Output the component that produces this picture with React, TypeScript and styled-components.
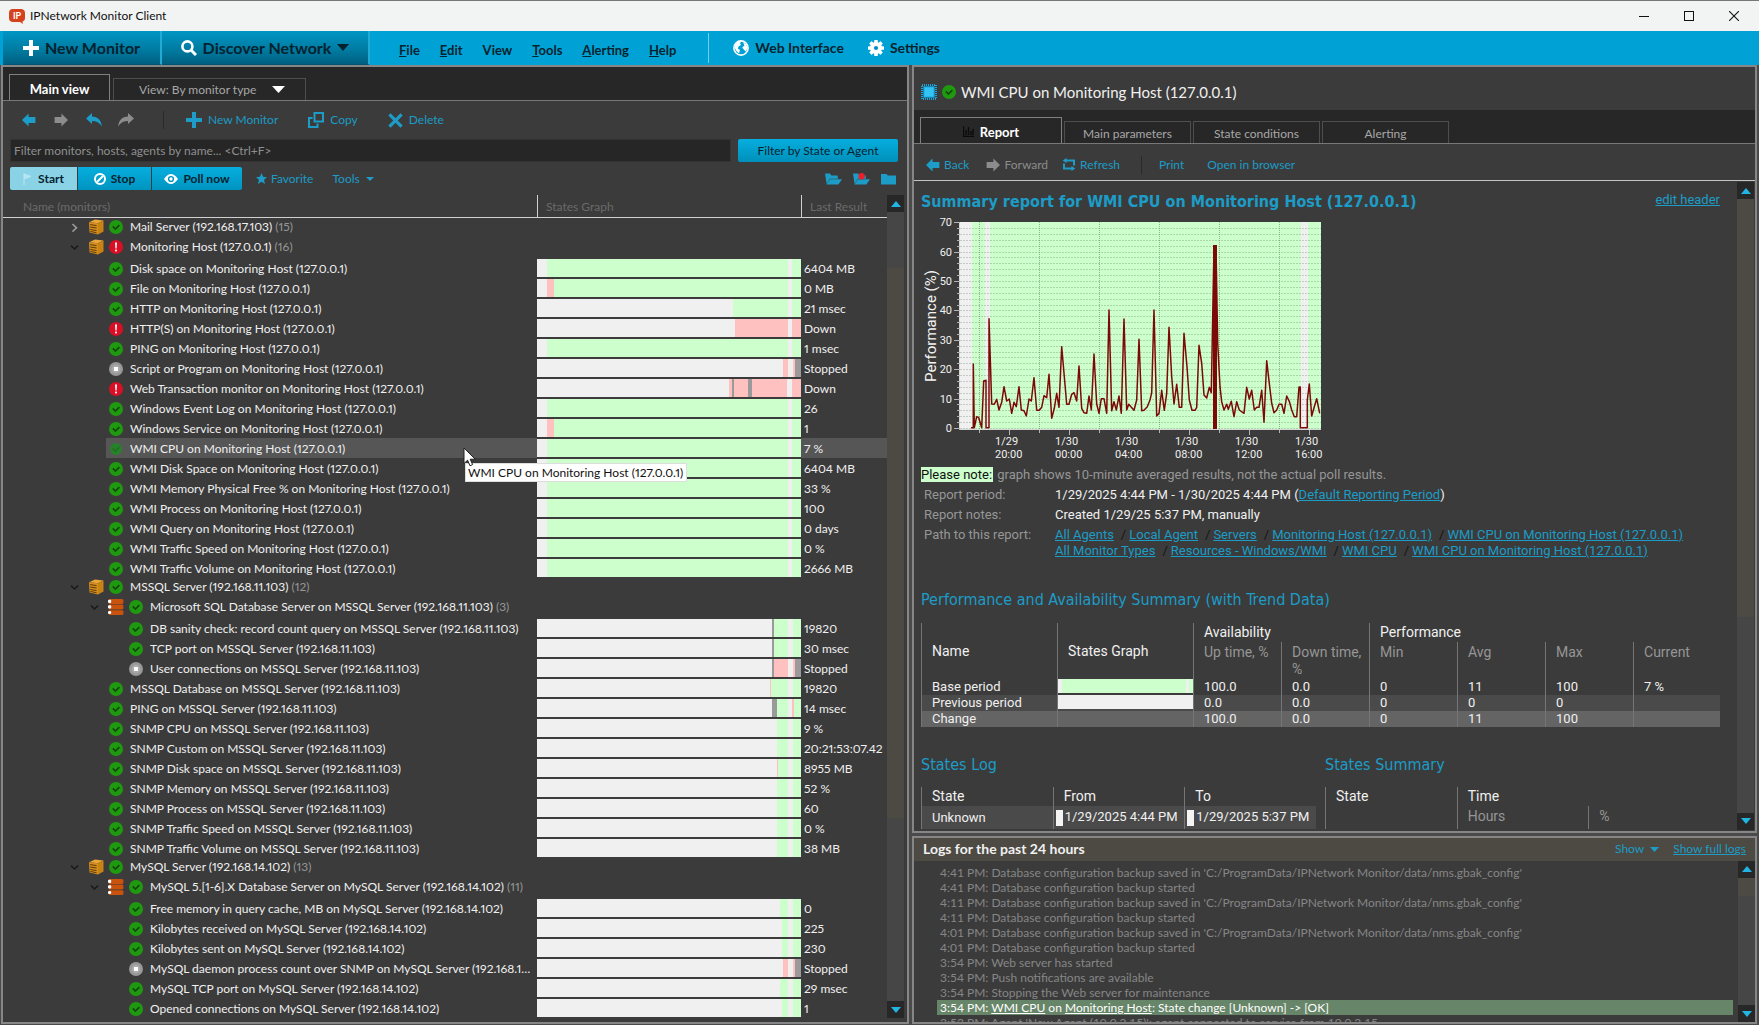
import React from 'react';
import styled, { createGlobalStyle, css } from 'styled-components';

const UI = 'Lato, "Open Sans", sans-serif';
const DOC = 'Roboto, "Liberation Sans", sans-serif';
const HEAD = '"DejaVu Sans Condensed", "DejaVu Sans", sans-serif';
const blue = '#1c9cc6';
const panel = '#3b3b3b';
const dark = '#272727';
const olive = '#4c4a43';
const edge = '#868686';

const Global = createGlobalStyle`
  *, *::before, *::after { box-sizing: border-box; }
  body { margin: 0; background: ${panel}; font: 12px/16px ${UI}; color: #f0f0f0; overflow: hidden; }
  button, input, select { font: inherit; color: inherit; margin: 0; padding: 0; border: 0; background: none; }
  svg { display: block; flex: none; }
  h1, h2, p, ol, dl, dd { margin: 0; padding: 0; font-weight: 400; }
  a { color: ${blue}; }
`;

/* ---------- window frame ---------- */
const Window = styled.div`
  height: 100vh; display: flex; flex-direction: column;
  border-top: 1px solid #77777a; background: #303030;
`;
const TitleBar = styled.header`
  height: 30px; flex: none; display: flex; align-items: center; gap: 5px;
  padding: 0 20px 0 9px; background: #f2f4f4; color: #111;
`;
const TitleText = styled.span`flex: 1;`;
const WinButtons = styled.div`display: flex; gap: 35px;`;
const WinButton = styled.button`width: 10px; height: 12px; display: grid; place-items: center;`;

const MenuBar = styled.nav`
  height: 34px; flex: none; display: flex; background: #00a2d5; padding-left: 3px;
`;
const BigButton = styled.button<{ $w: number }>`
  width: ${p => p.$w}px; display: flex; align-items: center; justify-content: center; gap: 6px;
  background: linear-gradient(#0096c4, #00799f 60%, #005f80);
  color: #03222f; font: 700 16px/20px ${UI};
  border-right: 2px solid #22a9d4;
  border-bottom: 1px solid #00546f;
`;
const Menus = styled.div`display: flex; align-items: center; gap: 20px; padding: 3px 32px 0 29px; color: #06222e; font-size: 13px;`;
const MenuItem = styled.button`font-weight: 700;`;
const Tools2 = styled.div`
  display: flex; align-items: center; gap: 24px; padding: 0 24px; margin: 2px 0;
  border-left: 1px solid #6fd0ee; color: #06222e; font-size: 14px;
`;
const IconMenu = styled.button`display: flex; align-items: center; gap: 6px; font-weight: 700;`;

const Body = styled.main`
  flex: 1; min-height: 0; display: grid; gap: 3px; background: #4a4a4a; padding: 0 2px 1px 1px;
  grid-template-columns: minmax(0, 908fr) minmax(0, 845fr);
`;
const Panel = styled.section`
  display: flex; flex-direction: column; min-height: 0; min-width: 0; background: ${panel};
  border: 2px solid ${edge}; overflow: hidden;
`;
const RightColumn = styled.div`display: grid; grid-template-rows: minmax(0, 767fr) minmax(0, 188fr); gap: 3px; min-height: 0;`;

/* ---------- tabs and tool rows ---------- */
const TabStrip = styled.div<{ $gap: number }>`
  height: 34px; flex: none; display: flex; align-items: flex-end; gap: ${p => p.$gap}px;
  background: ${dark}; border-bottom: 1px solid #777; padding-left: 6px;
`;
const tabBase = css<{ $w: number; $on?: boolean }>`
  width: ${p => p.$w}px; height: ${p => (p.$on ? 26 : 22)}px;
  border: 1px solid ${p => (p.$on ? '#808080' : '#4e4e4e')}; border-bottom: 0;
  color: ${p => (p.$on ? '#fff' : '#a8a8a8')}; background: ${dark};
`;
const Tab = styled.button<{ $w: number; $on?: boolean }>`
  ${tabBase} display: flex; align-items: center; justify-content: center; gap: 6px; padding-top: 2px;
  font-size: ${p => (p.$on ? 13 : 12)}px;
  font-weight: ${p => (p.$on ? 700 : 400)};
`;
const SelectTab = styled.label<{ $w: number }>`
  ${tabBase} display: flex; align-items: center; padding: 0 20px 0 25px; justify-content: space-between;
`;
const BareSelect = styled.select`appearance: none; outline: 0; flex: 1;`;

const ToolRow = styled.div<{ $h: number; $pad: number; $line?: boolean }>`
  height: ${p => p.$h}px; flex: none; display: flex; align-items: center; padding-left: ${p => p.$pad}px;
  ${p => p.$line && 'border-bottom: 1px solid #c4c4c4; padding-top: 5px;'}
`;
const Tool = styled.button<{ $mr: number; $off?: boolean; $gap?: number }>`
  display: flex; align-items: center; gap: ${p => p.$gap ?? 6}px; margin-right: ${p => p.$mr}px;
  color: ${p => (p.$off ? '#8c8c8c' : blue)};
`;
const Sep = styled.span<{ $mr: number }>`width: 1px; height: 18px; background: #2a2a2a; margin-right: ${p => p.$mr}px;`;

const FilterRow = styled.div`display: flex; gap: 7px; padding: 0 9px 0 7px; height: 23px; flex: none;`;
const FilterInput = styled.input`
  flex: 1; min-width: 0; background: #262626; border: 1px solid #333; padding-left: 3px; outline: 0;
  &::placeholder { color: #8f8f8f; opacity: 1; }
`;
const FilterButton = styled.button`
  width: 160px; border-radius: 2px; background: linear-gradient(#06aede, #0090ba); color: #06222e;
`;
const ActionRow = styled.div`display: flex; align-items: center; height: 33px; padding: 0 11px 0 7px; flex: none;`;
const Group = styled.div`display: flex; gap: 1px; border-radius: 2px; overflow: hidden; margin-right: 14px;`;
const Action = styled.button<{ $w: number; $on?: boolean }>`
  width: ${p => p.$w}px; height: 23px; display: flex; align-items: center; justify-content: center; gap: 5px; font-weight: 700;
  background: ${p => (p.$on ? '#8ad3e6' : 'linear-gradient(#06aede, #0094c0)')}; color: #06222e;
`;
const Folders = styled.div`margin-left: auto; display: flex; gap: 11px;`;

/* ---------- scroll bars ---------- */
const Track = styled.div`
  width: 17px; flex: none; display: flex; flex-direction: column; background: #464646;
`;
const Arrow = styled.button`height: 17px; flex: none; background: ${dark}; display: grid; place-items: center;`;
const Gap = styled.div<{ $f: number; $thumb?: boolean }>`flex: ${p => p.$f}; ${p => p.$thumb && `background: ${olive};`}`;

function Scroll({ before, thumb, after }: { before: number; thumb: number; after: number }) {
  return (
    <Track>
      <Arrow aria-label="Scroll up"><Tri up w={10} c="#22b4e2" /></Arrow>
      <Gap $f={before} /><Gap $f={thumb} $thumb /><Gap $f={after} />
      <Arrow aria-label="Scroll down"><Tri w={10} c="#22b4e2" /></Arrow>
    </Track>
  );
}

/* ---------- monitor tree ---------- */
const TreeArea = styled.div`flex: 1; min-height: 0; display: flex; padding: 0 3px 4px 0;`;
const TreeClip = styled.div`flex: 1; min-width: 0; overflow: hidden;`;
const TreeTable = styled.table`
  width: 100%; table-layout: fixed; border-collapse: separate; border-spacing: 0; text-align: left;
  font-variant-numeric: proportional-nums;
  th { height: 23px; padding: 2px 0 0 8px; color: #6a6a6a; font-weight: 400; border-bottom: 1px solid #d0d0d0; }
  th + th { border-left: 1px solid #d0d0d0; }
  th:first-child { padding-left: 20px; }
  td { height: 20px; padding: 0; position: relative; }
`;
const NameCell = styled.div<{ $pad: number; $sel?: boolean; $mon?: boolean }>`
  height: 20px; margin-left: ${p => p.$pad}px; display: flex; align-items: center;
  padding: ${p => (p.$mon ? '2px 0 0' : '0 0 2px')};
  ${p => p.$sel && 'background: #565656;'}
`;
const Slot = styled.span<{ $w: number }>`width: ${p => p.$w}px; display: flex; justify-content: flex-start; flex: none;`;
const Name = styled.span`white-space: nowrap; overflow: hidden; text-overflow: ellipsis; padding-right: 3px;`;
const Count = styled.span`color: #969696;`;
const BarCell = styled.td`&& { padding: 1px 0; }`;
const ResultCell = styled.td<{ $sel?: boolean }>`
  && { padding: 2px 0 0 3px; white-space: nowrap; ${p => p.$sel && 'background: #565656;'} }
`;
const Bar = styled.div<{ $h: number }>`height: ${p => p.$h}px; display: flex; background: #f0f0f0;`;
const Seg = styled.span<{ $c: string; $n: number }>`flex: ${p => p.$n} 0 0; background: ${p => p.$c};`;
const Tip = styled.div`
  position: absolute; left: 462px; top: 25px; z-index: 3; height: 19px; padding: 1px 3px 0 2px;
  background: #fff; color: #111; white-space: nowrap; border: 1px solid #ddd; line-height: 15px;
`;
const Pointer = styled.div`position: absolute; left: 460px; top: 9px; z-index: 4;`;

const C: Record<string, string> = { w: '#f0f0f0', g: '#ccffcc', r: '#ffc0c0', d: '#9a9a9a' };
const parse = (s: string) => s.split(' ').map(t => [t[0], Number(t.slice(1))] as [string, number]);
function States({ s, h = 18 }: { s: string; h?: number }) {
  return <Bar $h={h}>{parse(s).map(([c, n], i) => <Seg key={i} $c={C[c]} $n={n} />)}</Bar>;
}

const full = 'w10 g241 w4 g9';
const late = 'w240 g11 w5 g8';
const M = ' on Monitoring Host (127.0.0.1)';
const Q = ' on MSSQL Server (192.168.11.103)';
const Y = ' on MySQL Server (192.168.14.102)';
type Row = { k: 'host' | 'app' | 'mon'; lv: number; n: string; st: string; c?: number; s?: string; r?: string; sel?: boolean; closed?: boolean };
const mon = (lv: number, n: string, s: string, r: string, st = 'ok', sel = false): Row => ({ k: 'mon', lv, n, s, r, st, sel });
const ROWS: Row[] = [
  { k: 'host', lv: 0, n: 'Mail Server (192.168.17.103)', st: 'ok', c: 15, closed: true },
  { k: 'host', lv: 0, n: 'Monitoring Host (127.0.0.1)', st: 'bad', c: 16 },
  mon(1, 'Disk space' + M, full, '6404 MB'),
  mon(1, 'File' + M, 'w10 r7 g234 w4 g9', '0 MB'),
  mon(1, 'HTTP' + M, 'w196 g55 w4 g9', '21 msec'),
  mon(1, 'HTTP(S)' + M, 'w198 r53 w4 r9', 'Down', 'bad'),
  mon(1, 'PING' + M, full, '1 msec'),
  mon(1, 'Script or Program' + M, 'w246 r5 w5 r2 d6', 'Stopped', 'off'),
  mon(1, 'Web Transaction monitor' + M, 'w192 r3 d2 r14 d4 r35 w5 r9', 'Down', 'bad'),
  mon(1, 'Windows Event Log' + M, full, '26'),
  mon(1, 'Windows Service' + M, 'w10 r7 g234 w4 g9', '1'),
  mon(1, 'WMI CPU' + M, full, '7 %', 'sel', true),
  mon(1, 'WMI Disk Space' + M, full, '6404 MB'),
  mon(1, 'WMI Memory Physical Free %' + M, full, '33 %'),
  mon(1, 'WMI Process' + M, full, '100'),
  mon(1, 'WMI Query' + M, full, '0 days'),
  mon(1, 'WMI Traffic Speed' + M, full, '0 %'),
  mon(1, 'WMI Traffic Volume' + M, full, '2666 MB'),
  { k: 'host', lv: 0, n: 'MSSQL Server (192.168.11.103)', st: 'ok', c: 12 },
  { k: 'app', lv: 1, n: 'Microsoft SQL Database Server' + Q, st: 'ok', c: 3 },
  mon(2, 'DB sanity check: record count query' + Q, 'w235 d2 g14 w5 g8', '19820'),
  mon(2, 'TCP port' + Q, 'w235 d2 g14 w5 g8', '30 msec'),
  mon(2, 'User connections' + Q, 'w235 d2 r14 w5 r2 d6', 'Stopped', 'off'),
  mon(1, 'MSSQL Database' + Q, 'w233 r1 g17 w5 g8', '19820'),
  mon(1, 'PING' + Q, 'w235 d5 g11 w4 r2 g7', '14 msec'),
  mon(1, 'SNMP CPU' + Q, late, '9 %'),
  mon(1, 'SNMP Custom' + Q, late, '20:21:53:07.42'),
  mon(1, 'SNMP Disk space' + Q, 'w240 r1 g10 w5 g8', '8955 MB'),
  mon(1, 'SNMP Memory' + Q, late, '52 %'),
  mon(1, 'SNMP Process' + Q, late, '60'),
  mon(1, 'SNMP Traffic Speed' + Q, late, '0 %'),
  mon(1, 'SNMP Traffic Volume' + Q, late, '38 MB'),
  { k: 'host', lv: 0, n: 'MySQL Server (192.168.14.102)', st: 'ok', c: 13 },
  { k: 'app', lv: 1, n: 'MySQL 5.[1-6].X Database Server' + Y, st: 'ok', c: 11 },
  mon(2, 'Free memory in query cache, MB' + Y, 'w243 g8 w5 g8', '0'),
  mon(2, 'Kilobytes received' + Y, 'w245 g6 w5 g8', '225'),
  mon(2, 'Kilobytes sent' + Y, 'w245 g6 w5 g8', '230'),
  mon(2, 'MySQL daemon process count over SNMP' + Y, 'w246 r5 w5 r2 d6', 'Stopped', 'off'),
  mon(2, 'MySQL TCP port' + Y, 'w243 g8 w5 g8', '29 msec'),
  mon(2, 'Opened connections' + Y, 'w245 g6 w5 g8', '1'),
];

function TreeRow({ row }: { row: Row }) {
  const mark = <Slot $w={21}><Status st={row.st} /></Slot>;
  if (row.k !== 'mon')
    return (
      <tr>
        <td colSpan={3}>
          <NameCell $pad={67 + row.lv * 20}>
            <Slot $w={row.lv ? 18 : 19}><Chevron closed={row.closed} /></Slot>
            <Slot $w={row.lv ? 21 : 20}>{row.k === 'host' ? <HostIcon /> : <DbIcon />}</Slot>
            {mark}
            <Name>{row.n} <Count>({row.c})</Count></Name>
          </NameCell>
        </td>
      </tr>
    );
  return (
    <tr>
      <td>
        <NameCell $mon $pad={row.lv === 1 ? 103 : 123} $sel={row.sel}>
          <Slot $w={3} />{mark}<Name>{row.n}</Name>
        </NameCell>
        {row.sel && <><Pointer><Cursor /></Pointer><Tip role="tooltip">{row.n}</Tip></>}
      </td>
      <BarCell><States s={row.s!} /></BarCell>
      <ResultCell $sel={row.sel}>{row.r}</ResultCell>
    </tr>
  );
}

/* ---------- icons ---------- */
function Tri({ up, w = 8, c = blue }: { up?: boolean; w?: number; c?: string }) {
  const h = Math.round(w * 0.55);
  return <svg width={w} height={h} viewBox="0 0 10 6" preserveAspectRatio="none"><path d={up ? 'M0 6L5 0L10 6z' : 'M0 0H10L5 6z'} fill={c} /></svg>;
}
function Status({ st }: { st: string }) {
  if (st === 'bad')
    return <svg width="14" height="14" viewBox="0 0 14 14"><circle cx="7" cy="7" r="7" fill="#d90f26" /><path d="M6 2.6h2L7.6 8.4H6.4z" fill="#fff" /><rect x="6.1" y="9.6" width="1.8" height="1.8" fill="#fff" /></svg>;
  if (st === 'off')
    return <svg width="14" height="14" viewBox="0 0 14 14"><circle cx="7" cy="7" r="7" fill="#989898" /><circle cx="7" cy="7" r="4.4" fill="#aaa" /><rect x="5" y="5" width="4" height="4" fill="#fff" /></svg>;
  return <svg width="14" height="14" viewBox="0 0 14 14"><circle cx="7" cy="7" r={st === 'sel' ? 6 : 7} fill={st === 'sel' ? '#27812a' : '#1f9a10'} /><path d="M3.8 6.4L6.4 9L10.4 5.2" fill="none" stroke={st === 'sel' ? '#256e20' : '#15470f'} strokeWidth="1.7" /></svg>;
}
function HostIcon() {
  return (
    <svg width="15" height="16" viewBox="0 0 15 16">
      <path d="M0 3.2L6 .6L14.5 1.6L9 4.2z" fill="#e9a63a" /><path d="M0 3.2L9 4.2V15.6L.6 13.6z" fill="#d68f1f" /><path d="M9 4.2L14.5 1.6V12.4L9 15.6z" fill="#c98313" />
      <path d="M1.2 5.6L7.6 6.6M1.2 8L7.6 9M1.2 10.4L7.6 11.6M1.4 12.4L7.6 13.8" stroke="#5b3b08" strokeWidth="1" />
    </svg>
  );
}
function DbIcon() {
  return (
    <svg width="16" height="16" viewBox="0 0 16 16">
      {[0, 5.6, 11.2].map(y => <g key={y}><path d={`M1 ${y}h13.4l1 1v3l-1 .9H1z`} fill="#c9520c" /><rect x="0" y={y + 0.7} width="3.2" height="3.2" rx="1" fill="#fff" /></g>)}
    </svg>
  );
}
function Chevron({ closed }: { closed?: boolean }) {
  return <svg width="9" height="9" viewBox="0 0 9 9"><path d={closed ? 'M2.5 1L6.5 4.8L2.5 8.6' : 'M1 2.6L4.5 6L8 2.6'} fill="none" stroke={closed ? '#9a9a9a' : '#1b1b1b'} strokeWidth="1.6" /></svg>;
}
function Cursor() {
  return <svg width="14" height="20" viewBox="0 0 14 20"><path d="M1 1V16.5L4.6 13.2L7 18.8L9.6 17.6L7.2 12.2H12.2z" fill="#fff" stroke="#222" strokeWidth="1" /></svg>;
}
function Arrow2({ right, c = blue }: { right?: boolean; c?: string }) {
  return <svg width="14" height="14" viewBox="0 0 14 14"><path d={right ? 'M14 7L7.4 .4V4H.6v6h6.8v3.6z' : 'M0 7L6.6 .4V4h6.8v6H6.6v3.6z'} fill={c} /></svg>;
}
function Bend({ right, c = blue }: { right?: boolean; c?: string }) {
  return <svg width="16" height="14" viewBox="0 0 16 14"><path transform={right ? 'translate(16 0) scale(-1 1)' : undefined} d="M0 5.4L6 0V3.4C12 3.4 15 7 16 13.6C13.4 9.8 10.4 8 6 8V11z" fill={c} /></svg>;
}
function Plus({ s = 16, c = blue }: { s?: number; c?: string }) {
  return <svg width={s} height={s} viewBox="0 0 16 16"><path d="M6 0h4v6h6v4h-6v6H6v-6H0V6h6z" fill={c} /></svg>;
}
function CopyIcon() {
  return <svg width="16" height="16" viewBox="0 0 16 16"><path d="M6.5 1h8.5v8.5H6.5z" fill="none" stroke={blue} strokeWidth="2" /><path d="M4.5 6H1v9h8.5v-3.6" fill="none" stroke={blue} strokeWidth="2" /></svg>;
}
function Cross() {
  return <svg width="15" height="15" viewBox="0 0 15 15"><path d="M1.4 1.4L13.6 13.6M13.6 1.4L1.4 13.6" stroke={blue} strokeWidth="3.2" /></svg>;
}
function RefreshIcon() {
  return <svg width="14" height="13" viewBox="0 0 14 13"><path d="M3.6 2.5h8.4v5M10.4 10.5H2v-5" fill="none" stroke={blue} strokeWidth="2" /><path d="M4.6 0v5L.6 2.5zM9.4 8v5l4-2.5z" fill={blue} /></svg>;
}
function Folder({ open, alert }: { open?: boolean; alert?: boolean }) {
  return (
    <svg width={open ? 17 : 15} height="12" viewBox={open ? '0 0 17 12' : '0 0 15 12'}>
      {open ? <><path d="M0 .6h5l1.4 1.8H12.6L13 5.8H4.8L1.6 11z" fill={blue} /><path d="M5 6.2H17L13.4 11.4H1.4z" fill={blue} /></> : <path d="M0 1h5.4l1.4 1.6H15V11.4H0z" fill={blue} />}
      {alert && <circle cx="8.6" cy="3.2" r="3.2" fill="#e8212b" />}
    </svg>
  );
}
function Globe() {
  return (
    <svg width="16" height="16" viewBox="0 0 16 16">
      <circle cx="8" cy="8" r="7.1" fill="#00a2d5" stroke="#fff" strokeWidth="1.6" />
      <path d="M3 3.6C4.6 1.6 7 1 8.2 1.4L7 3.4L8 4.8L5.6 6.4L4.8 8.6L7 10L6 13.6C3.8 11.8 1.8 9.4 1.6 6.6zM10 2l3.4 2.4L14.6 8L12.6 11.6L10.6 9.2L9.2 7.6L11.4 5.4z" fill="#fff" />
    </svg>
  );
}
function Gear() {
  return (
    <svg width="16" height="16" viewBox="0 0 16 16">
      {[0, 45, 90, 135].map(a => <rect key={a} x="6.2" y="0" width="3.6" height="16" rx=".6" fill="#fff" transform={`rotate(${a} 8 8)`} />)}
      <circle cx="8" cy="8" r="6" fill="#fff" /><circle cx="8" cy="8" r="2.1" fill="#0090bd" />
    </svg>
  );
}
function Chip() {
  return (
    <svg width="16" height="16" viewBox="0 0 16 16">
      <rect x="1" y="1" width="14" height="14" fill="none" stroke="#18a4dd" strokeWidth="2" strokeDasharray="1 1" />
      <rect x="2.4" y="2.4" width="11.2" height="11.2" fill="#12b3ef" /><rect x="3.6" y="3.6" width="8.8" height="8.8" fill="#35c2f5" />
    </svg>
  );
}

/* ---------- report ---------- */
const ReportHead = styled.div`height: 43px; flex: none; display: flex; align-items: center; gap: 5px; padding: 6px 0 0 7px; font-size: 15px; line-height: 20px;`;
const ReportArea = styled.div`flex: 1; min-height: 0; display: flex; padding: 1px 1px 1px 0;`;
const Report = styled.div`flex: 1; min-width: 0; overflow: hidden; font: 13px/16px ${DOC}; padding: 10px 17px 0 7px;`;
const HeadLine = styled.div`display: flex; justify-content: space-between; align-items: flex-start; margin-bottom: 3px;`;
const Big = styled.h1`font: 700 16px/20px ${HEAD}; color: ${blue};`;
const Section = styled.h2`font: 16px/20px ${HEAD}; color: ${blue};`;
const Mark = styled.mark`background: #ccffcc; color: #111; padding-right: 1px; margin-right: 1px;`;
const Note = styled.p`color: #969696; margin: 6px 0 4px;`;
const Facts = styled.dl`
  display: grid; grid-template-columns: 131px 1fr; row-gap: 4px; padding-left: 3px;
  dt { color: #969696; }
`;
const Crumb = styled.span`white-space: nowrap; & + &::before { content: '/'; color: #151515; margin: 0 3px 0 7px; }`;

const DataTable = styled.table`
  width: 100%; table-layout: fixed; border-collapse: separate; border-spacing: 0; text-align: left;
  th, td { padding: 0 0 0 10px; border-left: 1px solid #757575; font-weight: 400; }
  th { font-size: 14px; line-height: 17px; }
`;
const HeadRow = styled.tr<{ $h: number }>`height: ${p => p.$h}px; th { vertical-align: middle; }`;
const SubTh = styled.th`&& { color: #969696; vertical-align: top; padding-top: 2px; }`;
const DataRow = styled.tr<{ $bg?: string; $h: number }>`height: ${p => p.$h}px; line-height: 16px; background: ${p => p.$bg || 'none'};`;
const BarTd = styled.td`&& { padding: 0; vertical-align: top; }`;
const Logs2 = styled.div`display: grid; grid-template-columns: 395px 1fr; column-gap: 9px;`;
const Stamp = styled.td`
  && { padding-left: 2px; white-space: nowrap; }
  &::before { content: ''; display: inline-block; width: 7px; height: 16px; margin-right: 2px; background: #f4f4f4; vertical-align: middle; }
`;

const LINE = `213,683 220,683 220,492 223,683 230,650 236,653 245,683 251,543 258,541 258,683 267,683 267,356 275,612 283,613 290,598 297,630 305,607 312,560 320,603 328,597 335,640 342,607 349,620 357,560 364,630 372,632 379,648 387,597 394,603 402,533 410,631 418,631 425,622 432,587 440,593 447,523 455,655 463,625 470,580 477,622 485,440 500,613 507,613 515,583 522,578 530,603 537,498 545,625 552,638 560,640 567,588 574,630 582,462 590,612 597,640 604,596 612,596 620,640 627,330 635,632 642,605 649,630 657,588 664,640 672,357 680,630 686,613 702,631 710,600 717,418 725,632 732,631 742,620 750,600 755,578 762,330 770,648 777,640 785,571 793,631 800,580 807,382 815,530 822,612 830,553 838,622 845,622 852,400 861,500 868,600 876,631 885,631 890,622 897,436 905,490 912,585 920,594 928,562 934,578 942,140 944,683 948,140 953,430 960,560 965,605 972,630 980,613 985,628 994,604 1002,650 1010,605 1018,630 1032,640 1040,562 1048,597 1055,571 1063,630 1070,622 1077,622 1085,571 1092,667 1100,482 1108,550 1115,610 1122,638 1130,630 1137,613 1145,613 1152,640 1160,588 1168,604 1175,630 1183,650 1190,650 1197,561 1201,561 1201,683 1222,683 1222,600 1228,552 1235,648 1243,620 1250,596 1259,640`;
const points = LINE.split(' ').map(p => { const [x, y] = p.split(',').map(Number); return `${(x / 3 - 21).toFixed(1)},${(y / 3 - 15).toFixed(1)}`; }).join(' ');
const yOf = (v: number) => 213 - v * 2.94;

function Chart() {
  const labels: [string, string][] = [['1/29', '20:00'], ['1/30', '00:00'], ['1/30', '04:00'], ['1/30', '08:00'], ['1/30', '12:00'], ['1/30', '16:00']];
  return (
    <svg width="404" height="246" viewBox="0 0 404 246" role="img" aria-label="Performance (%)" fontFamily={DOC}>
      <rect x="39" y="7" width="361" height="208" fill="#ccffcc" />
      <rect x="39" y="7" width="12" height="208" fill="#f0f0f0" />
      <rect x="64" y="7" width="5" height="208" fill="#f0f0f0" />
      <rect x="380" y="7" width="7" height="208" fill="#f0f0f0" />
      {Array.from({ length: 35 }, (_, i) => i * 2).map(v => <path key={v} d={`M39 ${Math.round(yOf(v)) + 0.5}H400`} stroke="#5a7a5a" strokeOpacity=".3" strokeDasharray="2 1" />)}
      {[0, 1, 2, 3, 4, 5].map(i => <path key={i} d={`M${58.5 + i * 60} 7V214`} stroke="#5a7a5a" strokeOpacity=".55" strokeDasharray="1 1" />)}
      <path d="M38.5 7V214.5H400" fill="none" stroke="#d8d8d8" />
      {Array.from({ length: 36 }, (_, i) => i * 2).map(v => <path key={v} d={`M${v % 10 ? 36 : 33} ${Math.round(yOf(v)) + 0.5}H39`} stroke="#b4b4b4" />)}
      {Array.from({ length: 12 }, (_, i) => i).map(i => <path key={i} d={`M${58.5 + i * 30} 215v${i % 2 ? 5 : 3}`} stroke="#b4b4b4" />)}
      {[0, 10, 20, 30, 40, 50, 60, 70].map(v => <text key={v} x="31" y={yOf(v) + 4} fontSize="11" fill="#f0f0f0" textAnchor="end">{v}</text>)}
      {labels.map(([a, b], i) => (
        <g key={i} fontSize="11" fill="#f0f0f0"><text x={74 + i * 60} y="230">{a}</text><text x={74 + i * 60} y="243">{b}</text></g>
      ))}
      <text transform="translate(15 111) rotate(-90)" textAnchor="middle" fontSize="15" fill="#f4f4f4">Performance (%)</text>
      <polyline points={points} fill="none" stroke="#7d0808" strokeWidth="1.5" strokeLinejoin="round" />
      <rect x="292" y="30" width="4" height="184" fill="#7d0808" />
    </svg>
  );
}

/* ---------- log panel ---------- */
const LogHead = styled.div`height: 23px; flex: none; display: flex; align-items: center; background: ${olive}; padding: 0 9px;`;
const LogTitle = styled.h2`flex: 1; && { font: 700 14px/20px ${UI}; }`;
const LogArea = styled.div`flex: 1; min-height: 0; display: flex;`;
const LogList = styled.ol`flex: 1; min-width: 0; overflow: hidden; list-style: none; && { padding: 4px 5px 0 23px; } color: #868686;`;
const LogItem = styled.li<{ $on?: boolean }>`
  height: 15px; line-height: 15px; padding-left: 3px; white-space: nowrap;
  ${p => p.$on && 'background: #678568; color: #fff;'}
  a { color: inherit; }
`;
const saved = "Database configuration backup saved in 'C:/ProgramData/IPNetwork Monitor/data/nms.gbak_config'";
const started = 'Database configuration backup started';
const LOG = [['4:41', saved], ['4:41', started], ['4:11', saved], ['4:11', started], ['4:01', saved], ['4:01', started],
  ['3:54', 'Web server has started'], ['3:54', 'Push notifications are available'], ['3:54', 'Stopping the Web server for maintenance']];

const perf = [
  { n: 'Base period', s: 'w4 g124 w3 g4', v: ['100.0', '0.0', '0', '11', '100', '7 %'], bg: undefined },
  { n: 'Previous period', s: 'w1', v: ['0.0', '0.0', '0', '0', '0', ''], bg: '#4a4a4a' },
  { n: 'Change', s: '', v: ['100.0', '0.0', '0', '11', '100', ''], bg: '#646464' },
];
const paths = [
  ['All Agents', 'Local Agent', 'Servers', 'Monitoring Host (127.0.0.1)', 'WMI CPU' + M],
  ['All Monitor Types', 'Resources - Windows/WMI', 'WMI CPU', 'WMI CPU' + M],
];

const Spacer = styled.div<{ $h: number }>`height: ${p => p.$h}px;`;

export default function App() {
  return (
    <>
      <Global />
      <Window>
        <TitleBar>
          <svg width="16" height="15" viewBox="0 0 16 15"><path d="M3 0h9.4Q16 .6 16 4v5q0 3-2.6 3.4L14 15l-3-2H3.4Q0 12.6 0 9V4Q0 .6 3 0z" fill="#d4431c" /><text x="8" y="10" fontSize="9" fontWeight="700" fill="#fff" textAnchor="middle" fontFamily={UI}>IP</text></svg>
          <TitleText>IPNetwork Monitor Client</TitleText>
          <WinButtons>
            <WinButton aria-label="Minimize"><svg width="10" height="10"><path d="M0 5.5H10" stroke="#111" /></svg></WinButton>
            <WinButton aria-label="Maximize"><svg width="10" height="10"><rect x=".5" y=".5" width="9" height="9" fill="none" stroke="#111" /></svg></WinButton>
            <WinButton aria-label="Close"><svg width="10" height="10"><path d="M0 0L10 10M10 0L0 10" stroke="#111" strokeWidth="1.1" /></svg></WinButton>
          </WinButtons>
        </TitleBar>
        <MenuBar>
          <BigButton $w={159}><Plus c="#fff" />New Monitor</BigButton>
          <BigButton $w={208}>
            <svg width="16" height="16" viewBox="0 0 16 16"><circle cx="6.4" cy="6.4" r="5" fill="none" stroke="#fff" strokeWidth="2.6" /><path d="M10 10L15 15" stroke="#fff" strokeWidth="3" /></svg>
            Discover Network<Tri w={12} c="#03222f" />
          </BigButton>
          <Menus>
            {['File', 'Edit', 'View', 'Tools', 'Alerting', 'Help'].map(m => (
              <MenuItem key={m}>{m === 'View' ? m : <><u>{m[0]}</u>{m.slice(1)}</>}</MenuItem>
            ))}
          </Menus>
          <Tools2><IconMenu><Globe />Web Interface</IconMenu><IconMenu><Gear />Settings</IconMenu></Tools2>
        </MenuBar>

        <Body>
          <Panel>
            <TabStrip $gap={3} role="tablist">
              <Tab role="tab" $w={101} $on>Main view</Tab>
              <SelectTab $w={193}>
                <BareSelect aria-label="View"><option>View: By monitor type</option></BareSelect>
                <Tri w={13} c="#fff" />
              </SelectTab>
            </TabStrip>
            <ToolRow $h={38} $pad={19}>
              <Tool $mr={18} aria-label="Back"><Arrow2 /></Tool>
              <Tool $mr={18} $off aria-label="Forward"><Arrow2 right c="#8c8c8c" /></Tool>
              <Tool $mr={16} aria-label="Undo"><Bend /></Tool>
              <Tool $mr={29} $off aria-label="Redo"><Bend right c="#8c8c8c" /></Tool>
              <Sep $mr={22} />
              <Tool $mr={30}><Plus />New Monitor</Tool>
              <Tool $mr={30}><CopyIcon />Copy</Tool>
              <Tool $mr={0}><Cross />Delete</Tool>
            </ToolRow>
            <FilterRow>
              <FilterInput aria-label="Filter" placeholder="Filter monitors, hosts, agents by name... <Ctrl+F>" />
              <FilterButton>Filter by State or Agent</FilterButton>
            </FilterRow>
            <ActionRow>
              <Group>
                <Action $w={67} $on><svg width="10" height="12" viewBox="0 0 10 12"><path d="M1 0v12M1 1l7 2.4L1 6" stroke="#b5e6f2" fill="#b5e6f2" /></svg>Start</Action>
                <Action $w={73}><svg width="12" height="12" viewBox="0 0 12 12"><circle cx="6" cy="6" r="5" fill="none" stroke="#fff" strokeWidth="2" /><path d="M3 9L9 3" stroke="#fff" strokeWidth="2" /></svg>Stop</Action>
                <Action $w={90}><svg width="14" height="10" viewBox="0 0 14 10"><path d="M0 5Q7-5 14 5Q7 15 0 5z" fill="#fff" /><circle cx="7" cy="5" r="2.4" fill="#fff" stroke="#0095c0" strokeWidth="1.4" /></svg>Poll now</Action>
              </Group>
              <Tool $mr={19} $gap={4}><svg width="11" height="11" viewBox="0 0 11 11"><path d="M5.5 0L7.1 3.8L11 4.2L8 6.8L9 11L5.5 8.7L2 11L3 6.8L0 4.2L3.9 3.8z" fill={blue} /></svg>Favorite</Tool>
              <Tool $mr={0}>Tools<Tri /></Tool>
              <Folders>
                <button aria-label="Expand all"><Folder open /></button>
                <button aria-label="Expand problems"><Folder open alert /></button>
                <button aria-label="Collapse all"><Folder /></button>
              </Folders>
            </ActionRow>
            <TreeArea>
              <TreeClip>
                <TreeTable>
                  <colgroup><col /><col width="264" /><col width="86" /></colgroup>
                  <thead><tr><th>Name (monitors)</th><th>States Graph</th><th>Last Result</th></tr></thead>
                  <tbody>{ROWS.map(r => <TreeRow key={r.n} row={r} />)}</tbody>
                </TreeTable>
              </TreeClip>
              <Scroll before={56} thumb={548} after={183} />
            </TreeArea>
          </Panel>

          <RightColumn>
            <Panel>
              <ReportHead><Chip /><Status st="ok" />WMI CPU{M}</ReportHead>
              <TabStrip $gap={2} role="tablist">
                <Tab role="tab" $w={142} $on>
                  <svg width="11" height="11" viewBox="0 0 11 11"><path d="M.5 0V10.5H11M3 9V4M5.5 9V1M8 9V5M10 9V3" stroke="#0b0b0b" strokeWidth="1.4" fill="none" /></svg>Report
                </Tab>
                <Tab role="tab" $w={127}>Main parameters</Tab>
                <Tab role="tab" $w={127}>State conditions</Tab>
                <Tab role="tab" $w={127}>Alerting</Tab>
              </TabStrip>
              <ToolRow $h={37} $pad={12} $line>
                <Tool $mr={17} $gap={4}><Arrow2 />Back</Tool>
                <Tool $mr={14} $gap={4} $off><Arrow2 right c="#8c8c8c" />Forward</Tool>
                <Tool $mr={21} $gap={4}><RefreshIcon />Refresh</Tool>
                <Sep $mr={17} />
                <Tool $mr={23}>Print</Tool>
                <Tool $mr={0}>Open in browser</Tool>
              </ToolRow>
              <ReportArea>
                <Report>
                  <HeadLine><Big>Summary report for WMI CPU{M}</Big><a href="#edit">edit header</a></HeadLine>
                  <Chart />
                  <Note><Mark>Please note:</Mark> graph shows 10-minute averaged results, not the actual poll results.</Note>
                  <Facts>
                    <dt>Report period:</dt><dd>1/29/2025 4:44 PM - 1/30/2025 4:44 PM (<a href="#period">Default Reporting Period</a>)</dd>
                    <dt>Report notes:</dt><dd>Created 1/29/25 5:37 PM, manually</dd>
                    <dt>Path to this report:</dt>
                    <dd>{paths.map((p, i) => <div key={i}>{p.map((t, j) => <Crumb key={j}><a href="#path">{t}</a></Crumb>)}</div>)}</dd>
                  </Facts>
                  <Spacer $h={31} />
                  <Section>Performance and Availability Summary (with Trend Data)</Section>
                  <Spacer $h={13} />
                  <DataTable>
                    <colgroup><col width="136" /><col width="136" /><col width="88" /><col width="88" /><col width="88" /><col width="88" /><col width="88" /><col /></colgroup>
                    <thead>
                      <HeadRow $h={19}><th rowSpan={2}>Name</th><th rowSpan={2}>States Graph</th><th colSpan={2}>Availability</th><th colSpan={4}>Performance</th></HeadRow>
                      <HeadRow $h={37}>
                        <SubTh>Up time, %</SubTh><SubTh>Down time, %</SubTh><SubTh>Min</SubTh><SubTh>Avg</SubTh><SubTh>Max</SubTh><SubTh>Current</SubTh>
                      </HeadRow>
                    </thead>
                    <tbody>
                      {perf.map(r => (
                        <DataRow key={r.n} $h={16} $bg={r.bg}>
                          <td>{r.n}</td><BarTd>{r.s && <States s={r.s} h={14} />}</BarTd>{r.v.map((v, i) => <td key={i}>{v}</td>)}
                        </DataRow>
                      ))}
                    </tbody>
                  </DataTable>
                  <Spacer $h={28} />
                  <Logs2>
                    <div>
                      <Section>States Log</Section><Spacer $h={12} />
                      <DataTable>
                        <thead><HeadRow $h={19}><th>State</th><th>From</th><th>To</th></HeadRow></thead>
                        <tbody><DataRow $h={23} $bg="#4a4a4a"><td>Unknown</td><Stamp>1/29/2025 4:44 PM</Stamp><Stamp>1/29/2025 5:37 PM</Stamp></DataRow></tbody>
                      </DataTable>
                    </div>
                    <div>
                      <Section>States Summary</Section><Spacer $h={12} />
                      <DataTable>
                        <thead>
                          <HeadRow $h={19}><th>State</th><th colSpan={2}>Time</th></HeadRow>
                          <HeadRow $h={23}><th /><SubTh>Hours</SubTh><SubTh>%</SubTh></HeadRow>
                        </thead>
                      </DataTable>
                    </div>
                  </Logs2>
                </Report>
                <Scroll before={0} thumb={416} after={195} />
              </ReportArea>
            </Panel>

            <Panel>
              <LogHead>
                <LogTitle>Logs for the past 24 hours</LogTitle>
                <Tool $mr={14}>Show<Tri w={9} /></Tool>
                <a href="#logs">Show full logs</a>
              </LogHead>
              <LogArea>
                <LogList>
                  {LOG.map(([t, m], i) => <LogItem key={i}>{t} PM: {m}</LogItem>)}
                  <LogItem $on>3:54 PM: <a href="#m">WMI CPU</a> on <a href="#h">Monitoring Host</a>: State change [Unknown] -&gt; [OK]</LogItem>
                  <LogItem>3:53 PM: Agent 'New Agent (10.0.2.15)': agent connected to service from 10.0.2.15</LogItem>
                </LogList>
                <Scroll before={0} thumb={18} after={110} />
              </LogArea>
            </Panel>
          </RightColumn>
        </Body>
      </Window>
    </>
  );
}
